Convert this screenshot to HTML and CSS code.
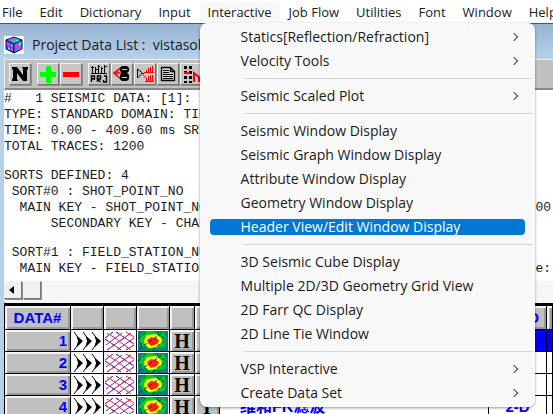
FILE: index.html
```html
<!DOCTYPE html>
<html lang="en">
<head>
<meta charset="utf-8">
<title>Project Data List</title>
<link rel="stylesheet" href="styles.css">
</head>
<body>
<svg class="defs" aria-hidden="true">
  <symbol id="wiggle" viewBox="0 0 30 20">
    <g fill="none" stroke="#000" stroke-width="1"><path d="M2 1l3 4 2 5-2 5-3 4M11 1l3 4 2 5-2 5-3 4M20 1l3 4 2 5-2 5-3 4"/></g>
    <path d="M5 5l6 5-6 6 1-6zM14 5l6 5-6 6 1-6zM23 5l6 5-6 6 1-6z"/>
  </symbol>
  <symbol id="mesh" viewBox="0 0 30 20">
    <g fill="none" stroke-width="1">
      <path stroke="#33f" d="M0 7L8 1M1 14L17 2M2 19L26 2M12 19L29 7M21 19L29 14"/>
      <path stroke="#f22" d="M2 2l8 5 8 6 8 6M0 8l9 6 7 5M11 1l9 6 9 6M21 1l8 5"/>
      <path stroke="#f22" stroke-dasharray="3 3" d="M0 7L8 1M2 19L26 2M21 19L29 14"/>
      <path stroke="#33f" stroke-dasharray="4 4" d="M0 8l9 6 7 5M11 1l9 6 9 6"/>
    </g>
  </symbol>
  <symbol id="spectrum" viewBox="0 0 30 20">
    <path fill="#078080" d="M0 0h30v20H0z"/>
    <path fill="#0c2" d="M3 3l5-3h6l5 2 7-1 3 7-3 8-7 1-7 2-7-3-4-6z"/>
    <path fill="#ff0" d="M6 9l3-5 9-1 5 4 1 4-5 5-8 1-4-3z"/>
    <path fill="#f20" d="M9 9l4-3 5 1 3 2-2 4-6 2-3-3z"/>
    <path fill="none" stroke="#036" stroke-width="1" stroke-dasharray="4 2" d="M0 8L8 1M1 18L24 2M14 19L29 8M1 11l11 8M19 2l10 7"/>
  </symbol>
</svg>

<nav class="menubar" aria-label="Main menu">
  <button>File</button><button>Edit</button><button>Dictionary</button><button>Input</button><div class="menu"><button class="open" aria-haspopup="menu" aria-expanded="true">Interactive</button>
    <div class="popup" role="menu">
      <button role="menuitem" class="sub">Statics[Reflection/Refraction]</button>
      <button role="menuitem" class="sub">Velocity Tools</button>
      <hr>
      <button role="menuitem" class="sub">Seismic Scaled Plot</button>
      <hr>
      <button role="menuitem">Seismic Window Display</button>
      <button role="menuitem">Seismic Graph Window Display</button>
      <button role="menuitem">Attribute Window Display</button>
      <button role="menuitem">Geometry Window Display</button>
      <button role="menuitem" class="selected">Header View/Edit Window Display</button>
      <hr>
      <button role="menuitem">3D Seismic Cube Display</button>
      <button role="menuitem">Multiple 2D/3D Geometry Grid View</button>
      <button role="menuitem">2D Farr QC Display</button>
      <button role="menuitem">2D Line Tie Window</button>
      <hr>
      <button role="menuitem" class="sub">VSP Interactive</button>
      <button role="menuitem" class="sub">Create Data Set</button>
    </div></div><button>Job Flow</button><button>Utilities</button><button>Font</button><button>Window</button><button>Help</button>
</nav>

<main class="window">
  <header class="titlebar">
    <svg width="20" height="18" viewBox="0 0 20 18" aria-hidden="true">
      <path fill="#fff" d="M0 0h20v18H0z"/>
      <path fill="#2bd" stroke="#101030" d="M10 1l8 3-8 4-8-4z"/>
      <path fill="#63e" stroke="#101030" d="M2 4l8 4v9l-8-4z"/>
      <path fill="#29c" stroke="#101030" d="M18 4l-8 4v9l8-4z"/>
      <path fill="#e3e" d="M6 3l4-1 2 1-4 2zM3 6l3 2v3l-3-2zM7 11l2 1v3l-2-1zM12 8l3-1v3l-3 2zM14 12l3-1v2l-3 1z"/>
      <path fill="#3ef" d="M12 4l3 0-2 2zM4 11l2 1v2l-2-1zM7 8l2 1v2l-2-1zM15 7l2-1v3l-2 1z"/>
    </svg>
    <h1>Project Data List :&nbsp; vistasol</h1>
  </header>

  <section class="client">
    <div class="toolbar" role="toolbar" aria-label="Data list tools">
      <div class="group">
        <button aria-label="New"><svg viewBox="0 0 20 20"><path d="M2 3h5l6 8V5l-1-2h6v2l-1 1v11h-4L7 9v6l1 2H2v-2l1-1V6L2 5z"/></svg></button>
      </div>
      <div class="group">
        <button aria-label="Add"><svg viewBox="0 0 20 20"><path fill="#0f0" d="M8 2h5v6h5v5h-5v6H8v-6H2V8h6z"/></svg></button>
        <button aria-label="Remove"><svg viewBox="0 0 20 20"><path fill="#f00" d="M2 8h16v5H2z"/></svg></button>
      </div>
      <div class="group">
        <button aria-label="Project"><svg viewBox="0 0 20 20"><path fill="none" stroke="#000" d="M2 9.500h16M3.500 2v7M6.500 3v6M9.500 1v8M12.500 3v6M15.500 1v8M2 3.500h3M6 5.500h3M9 2.500h2M12 4.500h2M15 2.500h3"/><path fill="none" stroke="#000" stroke-width="1.400" d="M2.500 18v-6h3v3h-3M8.500 18v-6h3v3h-3l3 3M17.500 12v6h-3v-2M15 12h3"/></svg></button>
        <button aria-label="Data input"><svg viewBox="0 0 20 20"><path fill="none" stroke="#f00" stroke-width="1.600" d="M10 3l-8 6 8 7M2 9h8"/><path d="M8 4l2-2h5l2 2v3l-2 2 2 2v4l-2 2h-5l-2-2v-4l2-2-2-2z"/><path stroke="#ccc" d="M10 5.500h5M10 13.500h5"/></svg></button>
        <button aria-label="Trace view"><svg viewBox="0 0 20 20"><path fill="none" stroke="#000" d="M2.500 5l5 4-5 5zM7 9.500h2"/><path fill="none" stroke="#f00" d="M9 8.500h10M10 17.500h9M11.500 8V6M13.500 8V4M15.500 8V3M17.500 8V2M11.500 17v-3M13.500 17v-5M15.500 17v-6M17.500 17v-6M8 11l3 3"/></svg></button>
        <button aria-label="Report"><svg viewBox="0 0 20 20"><path fill="#d4d4d4" stroke="#000" stroke-width="1.300" d="M3.500 3.500h9l4 4v9h-13zM12.500 3.500v4h4"/><path stroke="#000" d="M5 6.500h6M5 8.500h6M5 10.500h10M5 12.500h10M5 14.500h10"/></svg></button>
        <button aria-label="Sort"><svg viewBox="0 0 20 20"><path fill="none" stroke="#000" stroke-width="3" stroke-dasharray="3 2" d="M4.500 2v17M9.500 2v17"/><path fill="none" stroke="#f00" stroke-width="2" d="M3 9h6M13 18v-9l5 4v5"/></svg></button>
      </div>
    </div>

    <div class="listing">
      <div><p>#&nbsp;&nbsp; 1 SEISMIC DATA: [1]: 2</p><p>TYPE: STANDARD DOMAIN: TIM</p><p>TIME: 0.00 - 409.60 ms SR</p><p>TOTAL TRACES: 1200</p></div>
      <div><p>SORTS DEFINED: 4</p><p> SORT#0 : SHOT_POINT_NO</p><p>  MAIN KEY - SHOT_POINT_NO<span>00</span></p><p>      SECONDARY KEY - CHAN</p></div>
      <div><p> SORT#1 : FIELD_STATION_NU</p><p>  MAIN KEY - FIELD_STATION<span>re:</span></p></div>
    </div>

    <div class="scroll"><button aria-label="Scroll left"><svg viewBox="0 0 16 16"><path d="M4 8l5-4v8z"/></svg></button><button aria-label="Scroll position"></button></div>

    <table>
      <colgroup><col class="c-num"><col class="c-icon"><col class="c-icon"><col class="c-icon"><col class="c-head"><col class="c-head"><col><col class="c-dim"><col class="c-end"></colgroup>
      <thead><tr><th>DATA#</th><th></th><th></th><th></th><th></th><th></th><th></th><th class="right">D</th><th></th></tr></thead>
      <tbody>
        <tr class="current"><th>1</th><td><svg><use href="#wiggle"/></svg></td><td><svg><use href="#mesh"/></svg></td><td><svg><use href="#spectrum"/></svg></td><td class="key">H</td><td class="key">I</td><td></td><td></td><td></td></tr>
        <tr><th>2</th><td><svg><use href="#wiggle"/></svg></td><td><svg><use href="#mesh"/></svg></td><td><svg><use href="#spectrum"/></svg></td><td class="key">H</td><td class="key">I</td><td></td><td></td><td></td></tr>
        <tr><th>3</th><td><svg><use href="#wiggle"/></svg></td><td><svg><use href="#mesh"/></svg></td><td><svg><use href="#spectrum"/></svg></td><td class="key">H</td><td class="key">I</td><td></td><td></td><td></td></tr>
        <tr><th>4</th><td><svg><use href="#wiggle"/></svg></td><td><svg><use href="#mesh"/></svg></td><td><svg><use href="#spectrum"/></svg></td><td class="key">H</td><td class="key">I</td><td class="name">维和FK滤波</td><td class="dim">2-D</td><td></td></tr>
      </tbody>
    </table>
  </section>
</main>
</body>
</html>
```
FILE: styles.css
```css
* { box-sizing: border-box; }
html { overflow: hidden; }
body {
  margin: 0;
  height: 100vh;
  overflow: hidden;
  background: #b7d0ea;
  color: #1a1a1a;
  font-family: "Open Sans", "Noto Sans CJK SC", sans-serif;
  font-size: 13px;
}
button {
  border: 0;
  padding: 0;
  background: none;
  color: inherit;
  font: inherit;
}
.defs { display: none; }

.menubar {
  display: flex;
  gap: 1px;
  height: 24px;
  padding-top: 2px;
  background: #fff;
  border-bottom: 1px solid #555;
  white-space: nowrap;
}
.menubar > button, .menu > button {
  height: 20px;
  padding: 0 8px;
  line-height: 20px;
}
.menubar > button:first-child { padding-left: 2px; }
.menu { position: relative; }
.menu > .open { background: #f8f8f8; border-radius: 3px; }

.popup {
  position: absolute;
  z-index: 2;
  top: 21px;
  left: 0;
  width: 335px;
  padding: 2px 0;
  display: flex;
  flex-direction: column;
  background: #f9f9f9;
  border-radius: 7px;
  box-shadow: 0 1px 3px #0006;
  font-size: 14px;
}
.popup button {
  display: flex;
  align-items: center;
  justify-content: space-between;
  height: 16px;
  margin: 4px 10px;
  padding: 0 8px 0 31px;
  line-height: 16px;
  border-radius: 4px;
}
.popup hr {
  width: 290px;
  height: 1px;
  margin: 5px 0 5px 43px;
  border: 0;
  background: #d8d8d8;
}
.popup .selected { background: #0078d4; color: #fff; }
.sub::after {
  content: "";
  width: 5px;
  height: 5px;
  border: solid #444;
  border-width: 1px 1px 0 0;
  transform: rotate(45deg);
}

.window { padding-left: 4px; }
.titlebar {
  display: flex;
  align-items: center;
  gap: 8px;
  height: 35px;
  margin-left: -4px;
  padding: 6px 0 0 4px;
  background: linear-gradient(#97b4d3, #b9d1ea);
}
.titlebar h1 { margin: 0; font-size: 14px; font-weight: 400; line-height: 20px; }
.client { background: #fff; }

.toolbar {
  display: flex;
  gap: 6px;
  height: 31px;
  padding: 3px 0 0 4px;
  background: #c0c0c0;
  border: solid #eee;
  border-width: 1px 0 0 1px;
  border-bottom: 2px solid #888;
}
.group { display: flex; gap: 1px; }
.toolbar button, .scroll button {
  width: 22px;
  height: 22px;
  background: #c6c6c6;
  border: 1px solid;
  border-color: #f4f4f4 #777 #777 #f4f4f4;
  box-shadow: 1px 1px 0 #909090;
}
.toolbar svg, .scroll svg { display: block; width: 100%; height: 100%; }

.listing {
  display: flex;
  flex-direction: column;
  gap: 13px;
  height: 191px;
  padding-top: 1px;
  font: 13px/16px "Liberation Mono", monospace;
  white-space: pre;
}
.listing p { display: flex; margin: 0; }
.listing span { margin-left: auto; padding-right: 2px; }

.scroll {
  display: flex;
  gap: 1px;
  height: 22px;
  padding-bottom: 4px;
  background: #f6f6f6;
}
.scroll button { width: 18px; height: 18px; background: #f0f0f0; }

table {
  width: 100%;
  table-layout: fixed;
  border-collapse: separate;
  border-spacing: 0;
  border-top: 3px solid #000;
  border-left: 1px solid #000;
  color: #00f;
  font: 700 15px/18px "Liberation Sans", sans-serif;
}
.c-num { width: 66px; }
.c-icon { width: 33px; }
.c-head { width: 25px; }
.c-dim { width: 58px; }
.c-end { width: 6px; }
tr { height: 22px; }
thead tr { height: 24px; }
th, td {
  padding: 0;
  border-right: 1px solid #000;
  border-bottom: 1px solid #000;
  overflow: hidden;
  white-space: nowrap;
}
th, .key {
  background: #c0c0c0;
  box-shadow: inset 2px 2px 0 #f4f4f4, inset -2px -2px 0 #999;
}
tbody th { padding-right: 3px; text-align: right; }
th.right { padding-right: 7px; text-align: right; }
td svg { display: block; width: 30px; height: 20px; margin: 0 auto; }
.key {
  color: #000;
  font-family: "Liberation Serif", serif;
  font-size: 20px;
  text-align: center;
}
.current td:nth-child(n+7) { background: #00f; }
.name {
  padding-left: 20px;
  font-family: "Liberation Sans", "Noto Sans CJK SC", sans-serif;
  font-size: 16px;
}
.dim { text-align: center; }
```
